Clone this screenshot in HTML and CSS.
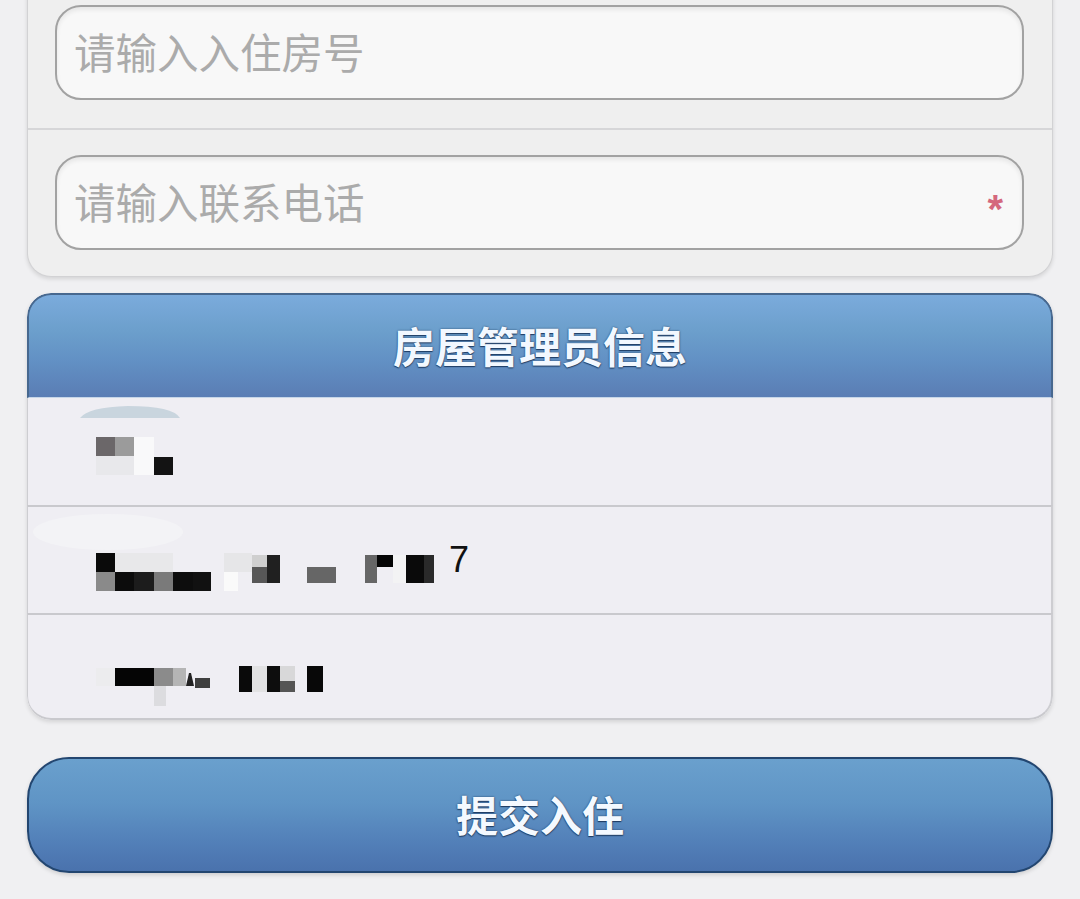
FILE: index.html
```html
<!DOCTYPE html>
<html lang="zh-CN">
<head>
<meta charset="utf-8">
<title>入住登记</title>
<link rel="stylesheet" href="styles.css">
</head>
<body>
<div class="form">
  <div class="form-row">
    <div class="field"><input class="field-input" type="text" placeholder="请输入入住房号"></div>
  </div>
  <div class="form-row last">
    <div class="field"><input class="field-input" type="tel" placeholder="请输入联系电话"><span class="req">*</span></div>
  </div>
</div>

<div class="info">
  <div class="info-head">房屋管理员信息</div>
  <div class="info-row first">
    <svg class="mosaic" width="200" height="107" viewBox="0 0 200 107">
      <path d="M52 20 Q60 9 100 8 Q145 8 152 20 Z" fill="#c9d5de"/>
      <rect x="68" y="58" width="38" height="19" fill="#e8e8eb"/>
      <rect x="68" y="39" width="19" height="19" fill="#6b6769"/>
      <rect x="87" y="39" width="19" height="19" fill="#9b9b9b"/>
      <rect x="106" y="39" width="20" height="38" fill="#f9f9fa"/>
      <rect x="126" y="59" width="19" height="18" fill="#131313"/>
    </svg>
  </div>
  <div class="info-row">
    <svg class="mosaic wide" width="421" height="106" viewBox="0 0 421 106">
      <ellipse cx="80" cy="25" rx="75" ry="18" fill="#f3f3f6"/>
      <rect x="87" y="46" width="58" height="19" fill="#e8e8ea"/>
      <rect x="68" y="46" width="19" height="19" fill="#0a0a0a"/>
      <rect x="68" y="65" width="19" height="19" fill="#8a8a8a"/>
      <rect x="87" y="65" width="19" height="19" fill="#0c0c0c"/>
      <rect x="106" y="65" width="20" height="19" fill="#1c1c1c"/>
      <rect x="126" y="65" width="19" height="19" fill="#7a7a7a"/>
      <rect x="145" y="65" width="20" height="19" fill="#0d0d0d"/>
      <rect x="165" y="65" width="18" height="19" fill="#111111"/>
      <rect x="196" y="46" width="28" height="19" fill="#e6e6e8"/>
      <rect x="196" y="65" width="14" height="19" fill="#fafafa"/>
      <rect x="224" y="48" width="15" height="12" fill="#cfcfcf"/>
      <rect x="224" y="60" width="15" height="16" fill="#575757"/>
      <rect x="239" y="48" width="13" height="28" fill="#202020"/>
      <rect x="279" y="60" width="29" height="16" fill="#666666"/>
      <rect x="337" y="48" width="12" height="28" fill="#666666"/>
      <rect x="349" y="48" width="16" height="12" fill="#050505"/>
      <rect x="365" y="48" width="13" height="28" fill="#f3f3f4"/>
      <rect x="378" y="48" width="18" height="28" fill="#0a0a0a"/>
      <rect x="396" y="48" width="10" height="28" fill="#2a2a2a"/>
    </svg>
    <span class="digit">7</span>
  </div>
  <div class="info-row last">
    <svg class="mosaic" width="320" height="103" viewBox="0 0 320 103">
      <rect x="68" y="53" width="19" height="18" fill="#ececee"/>
      <rect x="87" y="53" width="39" height="18" fill="#050505"/>
      <rect x="126" y="53" width="19" height="18" fill="#8b8b8b"/>
      <rect x="145" y="53" width="13" height="18" fill="#b5b5b5"/>
      <rect x="126" y="71" width="12" height="20" fill="#dcdcdf"/>
      <path d="M158 71 L161 58 L163 58 L166 71 Z" fill="#222222"/>
      <rect x="167" y="63" width="15" height="10" fill="#3f3f3f"/>
      <rect x="211" y="51" width="13" height="26" fill="#0a0a0a"/>
      <rect x="224" y="51" width="15" height="26" fill="#e2e2e3"/>
      <rect x="239" y="51" width="13" height="26" fill="#0d0d0d"/>
      <rect x="252" y="51" width="15" height="15" fill="#d8d8d9"/>
      <rect x="252" y="66" width="15" height="11" fill="#555555"/>
      <rect x="279" y="51" width="16" height="26" fill="#080808"/>
    </svg>
  </div>
</div>

<button class="submit" type="button">提交入住</button>
</body>
</html>
```
FILE: styles.css
```css
* { box-sizing: border-box; }
html, body { margin: 0; padding: 0; }
body {
  background: #f0f0f2;
  font-family: "Noto Sans CJK SC", "Noto Sans", sans-serif;
  width: 1080px;
  height: 899px;
  overflow: hidden;
}

.form {
  margin: -22px 27px 0;
  background: #efefef;
  border: 1px solid #d2d2d4;
  border-top: none;
  border-radius: 0 0 24px 24px;
  box-shadow: 0 2px 4px rgba(0, 0, 0, 0.12);
}
.form-row {
  padding: 27px 28px 28px 27px;
  border-bottom: 2px solid #d6d6d8;
}
.form-row.last {
  padding-top: 25px;
  padding-bottom: 26px;
  border-bottom: none;
}
.field {
  display: flex;
  align-items: center;
  height: 95px;
  border: 2px solid #a2a2a2;
  border-radius: 26px;
  background: #f8f8f8;
  box-shadow: inset 0 3px 4px rgba(0, 0, 0, 0.07);
  padding: 0 19px 0 17px;
}
.field-input {
  flex: 1;
  min-width: 0;
  border: none;
  outline: none;
  background: transparent;
  font-family: "Noto Sans CJK SC", sans-serif;
  font-size: 41.5px;
  color: #333;
  padding: 0;
  height: 60px;
  margin-bottom: 4px;
}
.field-input::placeholder { color: #ababab; }
.req {
  color: #d4687d;
  font-family: "Liberation Sans", sans-serif;
  font-size: 40px;
  font-weight: bold;
  line-height: 1;
  margin-top: 12px;
}

.info {
  margin: 16px 27px 0;
  border-radius: 24px;
  overflow: hidden;
  box-shadow: 0 2px 4px rgba(0, 0, 0, 0.12);
}
.info-head {
  height: 105px;
  border: 2px solid #47688f;
  border-bottom: 1px solid #c6d6e8;
  border-radius: 24px 24px 0 0;
  background: linear-gradient(#7babdc 0%, #6c9fcc 35%, #6290c4 65%, #5a7db4 100%);
  display: flex;
  align-items: center;
  justify-content: center;
  color: #f2f8ff;
  font-size: 42px;
  font-weight: bold;
  text-shadow: 0 1px 1px #1f3c63, 0 0 2px #244469;
  padding-bottom: 4px;
}
.info-row {
  display: flex;
  align-items: flex-start;
  height: 108px;
  background: #efeef3;
  border-left: 1px solid #cdcdd1;
  border-right: 2px solid #cdcdd1;
  border-top: 2px solid #c9c9cd;
}
.info-row.first {
  height: 107px;
  border-top: none;
}
.info-row.last {
  height: 107px;
  border-bottom: 2px solid #c9c9cd;
  border-radius: 0 0 24px 24px;
}
.mosaic {
  display: block;
  flex: none;
}
.digit {
  font-family: "Liberation Sans", Arial, sans-serif;
  font-size: 36px;
  line-height: 36px;
  color: #111;
  margin-top: 35px;
}

.submit {
  display: flex;
  align-items: center;
  justify-content: center;
  width: 1026px;
  height: 116px;
  margin: 37px 27px 0;
  padding: 0 0 4px;
  border: 2px solid #234670;
  border-radius: 42px;
  background: linear-gradient(#6aa0cd 0%, #5f94c5 40%, #527fb8 75%, #4a72ad 100%);
  box-shadow: 0 2px 4px rgba(0, 0, 0, 0.15);
  color: #f4f9ff;
  font-family: "Noto Sans CJK SC", sans-serif;
  font-size: 42px;
  font-weight: bold;
  text-shadow: 0 1px 1px #1d3a60, 0 0 2px #1d3a60;
}
```
